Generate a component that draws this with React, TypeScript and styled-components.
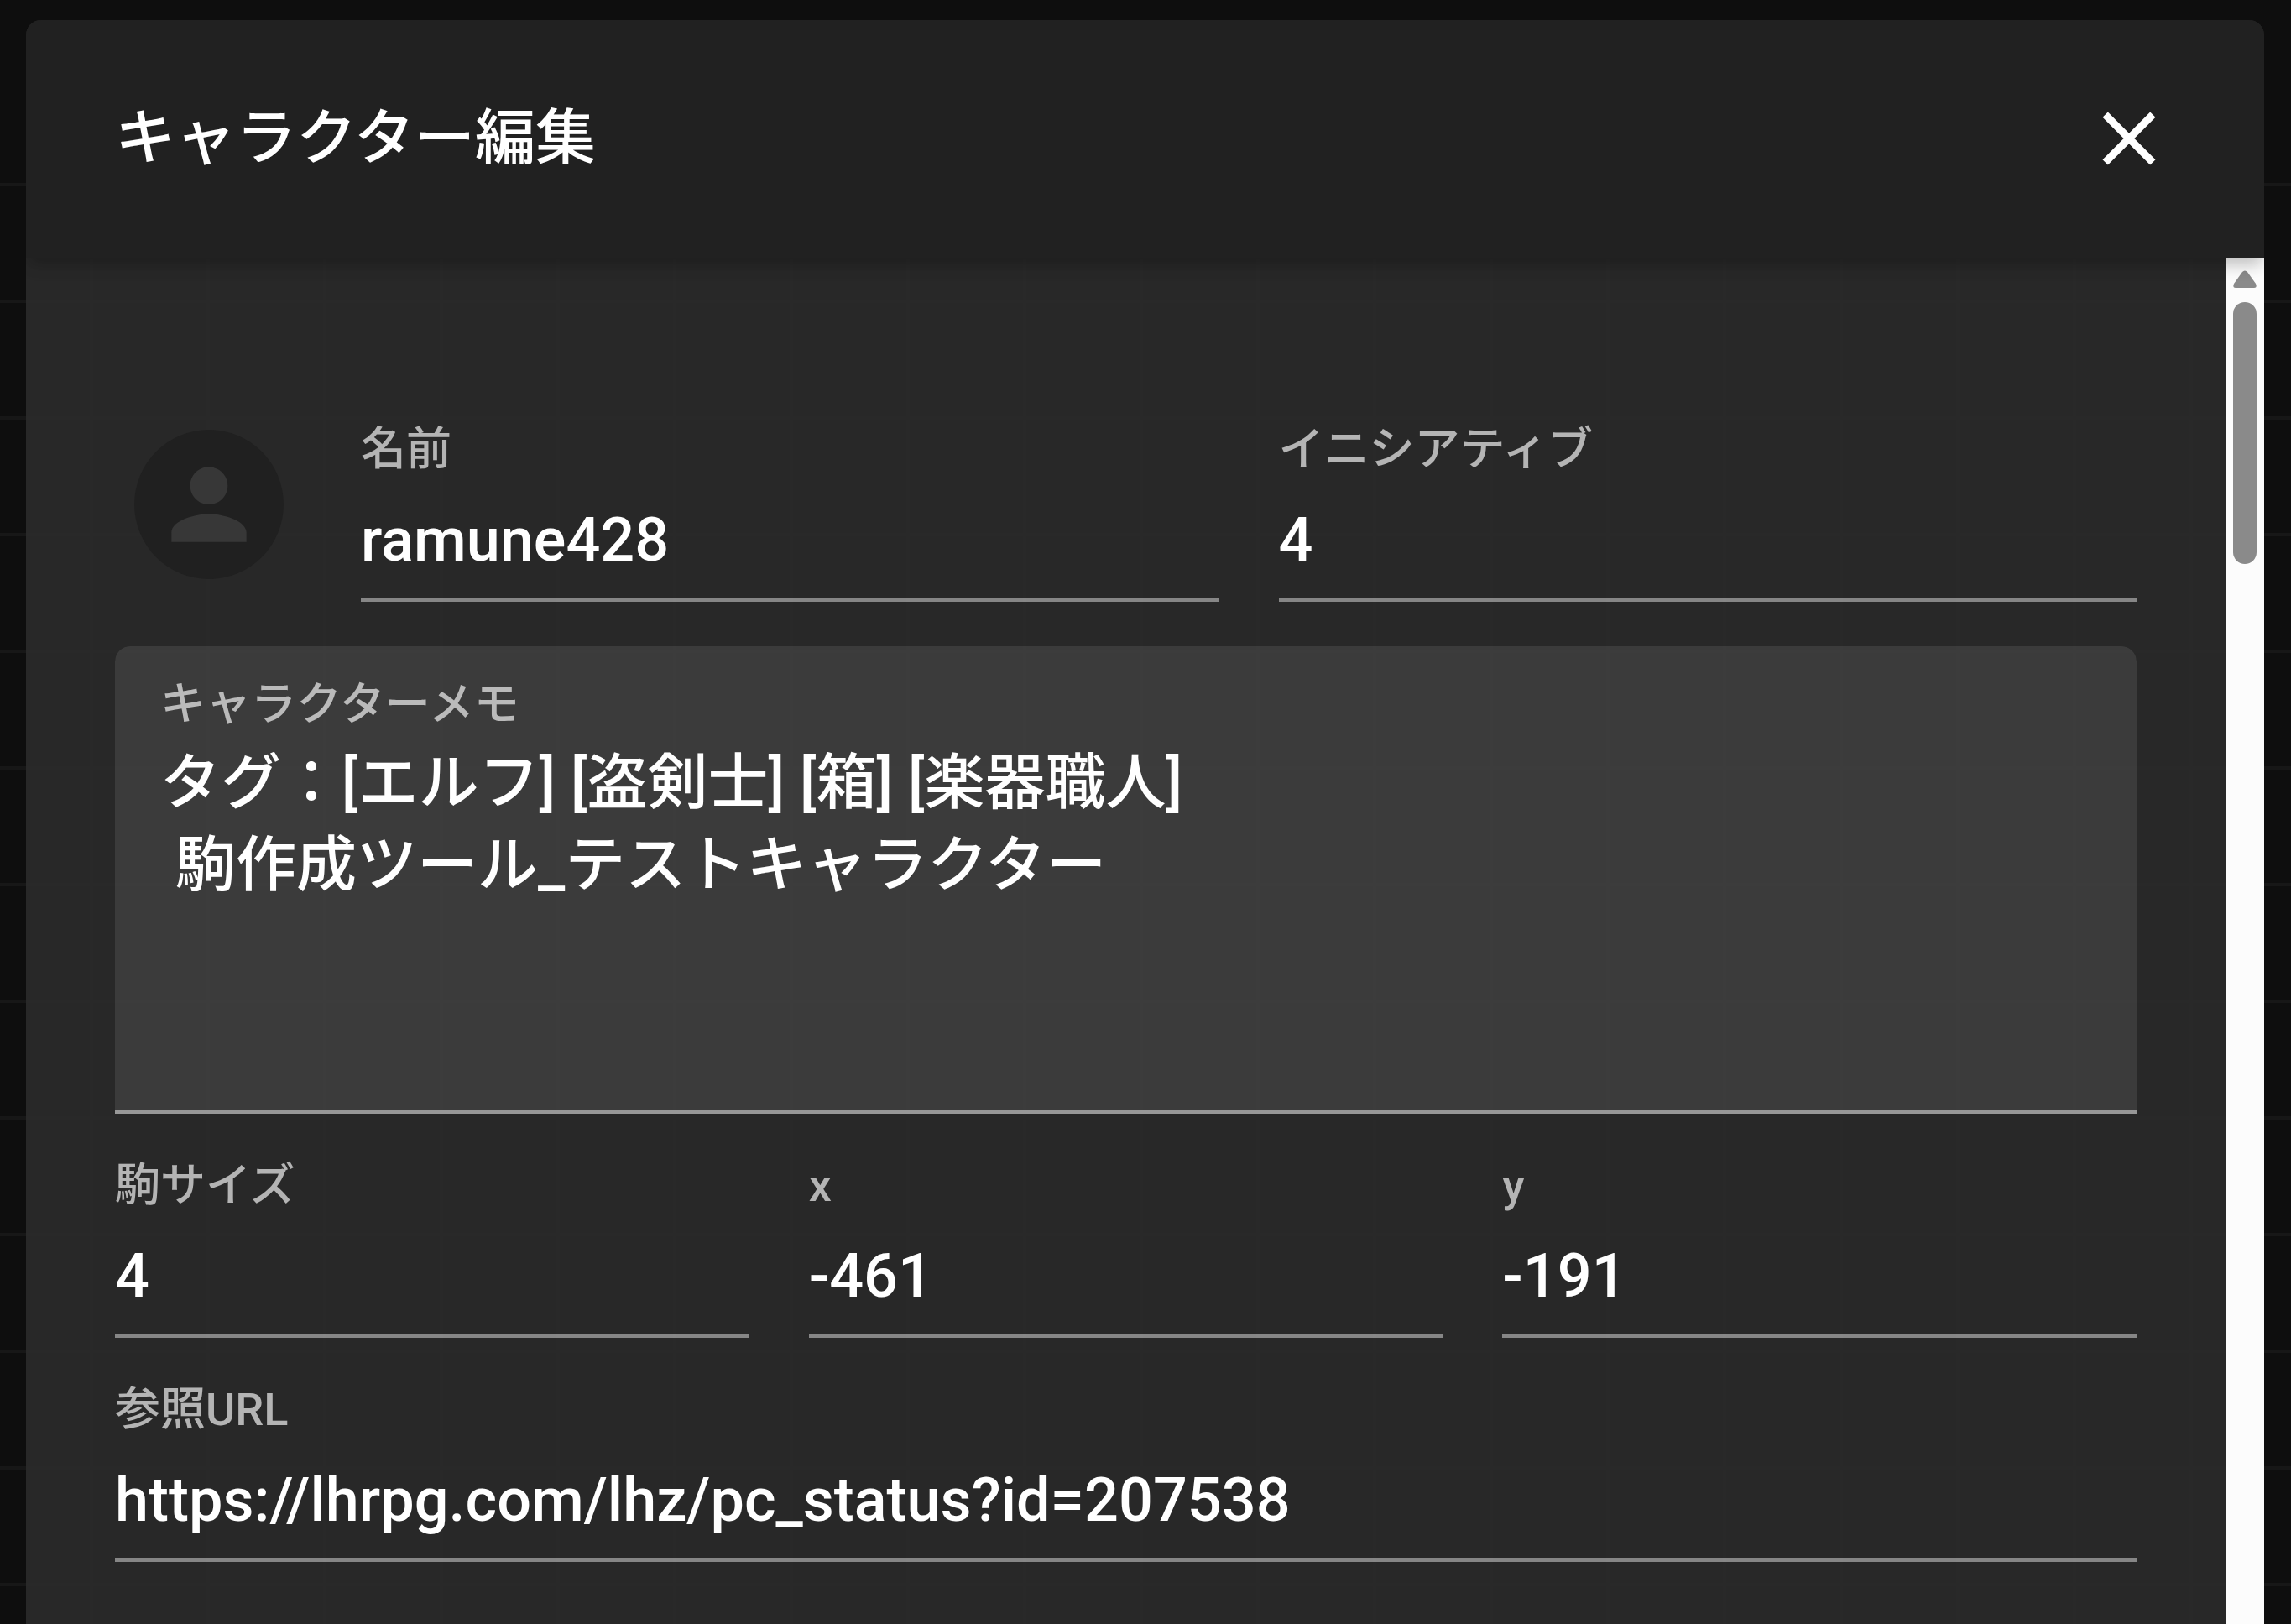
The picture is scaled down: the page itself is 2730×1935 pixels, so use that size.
import React, { useId } from "react";
import styled, { createGlobalStyle } from "styled-components";
import { MdClose, MdPerson } from "react-icons/md";

const GlobalStyle = createGlobalStyle`
  *, *::before, *::after { box-sizing: border-box; }
  body {
    margin: 0;
    background: #0e0e0e;
    color: #fff;
    font-family: Roboto, "Noto Sans CJK JP", sans-serif;
    font-size: 72px;
    font-weight: 500;
  }
`;

/* Board grid behind the dialog; it starts below the board's own bar. */
const Board = styled.div`
  display: flex;
  flex-direction: column;
  height: 100vh;
  padding: 24px 32px 0 31px;
  overflow: hidden;
  background-image: linear-gradient(#0e0e0e 200px, transparent 200px),
    linear-gradient(#171717 4px, transparent 4px),
    linear-gradient(90deg, #171717 4px, transparent 4px);
  background-size: 100% 100%, 139px 139px, 139px 139px;
  background-position: 0 0, 0 79px, 107px 0;
  background-repeat: no-repeat, repeat, repeat;
`;

const Dialog = styled.form`
  flex: 1;
  min-height: 0;
  display: flex;
  flex-direction: column;
  overflow: hidden;
  border-radius: 18px 18px 0 0;
  background: rgba(44, 44, 44, 0.88);
`;

const Header = styled.header`
  position: relative;
  z-index: 1;
  flex: none;
  display: flex;
  align-items: center;
  justify-content: space-between;
  height: 284px;
  padding: 0 107px 2px 106px;
  background: #212121;
  box-shadow: 0 9px 18px -4px rgba(0, 0, 0, 0.2),
    0 10px 20px 0 rgba(0, 0, 0, 0.08);
`;

const Title = styled.h1`
  margin: 0;
  font-size: 72px;
  font-weight: 500;
  line-height: 98px;
`;

const CloseButton = styled.button`
  display: flex;
  padding: 0;
  border: 0;
  background: none;
  color: #fff;
  font-size: 108px;
  cursor: pointer;
`;

const ScrollArea = styled.div`
  flex: 1;
  min-height: 0;
  display: flex;
`;

const Content = styled.div`
  flex: 1;
  min-width: 0;
  display: flex;
  flex-direction: column;
  gap: 53px;
  padding: 195px 106px 0;
`;

const Row = styled.div<{ $columns: string }>`
  display: grid;
  grid-template-columns: ${(p) => p.$columns};
  column-gap: 71px;
`;

const AvatarButton = styled.button`
  align-self: start;
  display: flex;
  align-items: center;
  justify-content: center;
  width: 178px;
  height: 178px;
  margin: 9px 21px 0 23px;
  padding: 0;
  border: 0;
  border-radius: 50%;
  background: #202020;
  color: #373737;
  font-size: 134px;
  cursor: pointer;
`;

const FieldBox = styled.div`
  display: flex;
  flex-direction: column;
  min-width: 0;
  border-bottom: 5px solid rgba(255, 255, 255, 0.44);
`;

const Label = styled.label`
  font-size: 54px;
  line-height: 66px;
  color: rgba(255, 255, 255, 0.65);
`;

const Input = styled.input`
  width: 100%;
  height: 143px;
  padding: 6px 0 0;
  border: 0;
  outline: 0;
  background: none;
  color: inherit;
  font: inherit;
`;

const MemoBox = styled(FieldBox)`
  gap: 11px;
  padding: 37px 54px 0;
  border-radius: 18px 18px 0 0;
  border-bottom-color: rgba(255, 255, 255, 0.52);
  background: rgba(255, 255, 255, 0.09);
  background-clip: padding-box;
`;

const MemoText = styled.textarea`
  display: block;
  width: 100%;
  height: 438px;
  padding: 0;
  border: 0;
  outline: 0;
  resize: none;
  overflow: hidden;
  background: none;
  color: inherit;
  font: inherit;
  line-height: 98px;
`;

const Track = styled.div`
  flex: none;
  display: flex;
  flex-direction: column;
  align-items: center;
  gap: 17px;
  width: 46px;
  padding-top: 14px;
  background: #fcfcfc;
`;

const Arrow = styled.svg`
  display: block;
  width: 28px;
  height: 21px;
  fill: #8a8a8a;
`;

const Thumb = styled.div`
  width: 28px;
  height: 312px;
  border-radius: 14px;
  background: #8a8a8a;
`;

type FieldProps = { label: string; value: string; type?: string };

function Field({ label, value, type = "text" }: FieldProps) {
  const id = useId();
  return (
    <FieldBox>
      <Label htmlFor={id}>{label}</Label>
      <Input id={id} type={type} defaultValue={value} />
    </FieldBox>
  );
}

export default function App() {
  return (
    <>
      <GlobalStyle />
      <Board>
        <Dialog role="dialog" aria-labelledby="dialog-title">
          <Header>
            <Title id="dialog-title">キャラクター編集</Title>
            <CloseButton type="button" aria-label="閉じる">
              <MdClose />
            </CloseButton>
          </Header>
          <ScrollArea>
            <Content>
              <Row $columns="auto 1fr 1fr">
                <AvatarButton type="button" aria-label="画像">
                  <MdPerson />
                </AvatarButton>
                <Field label="名前" value="ramune428" />
                <Field label="イニシアティブ" value="4" />
              </Row>
              <MemoBox>
                <Label htmlFor="memo">キャラクターメモ</Label>
                <MemoText
                  id="memo"
                  spellCheck={false}
                  defaultValue={
                    "タグ：[エルフ] [盗剣士] [箱] [楽器職人]\n 駒作成ツール_テストキャラクター"
                  }
                />
              </MemoBox>
              <Row $columns="repeat(3, 1fr)">
                <Field label="駒サイズ" value="4" />
                <Field label="x" value="-461" />
                <Field label="y" value="-191" />
              </Row>
              <Field
                label="参照URL"
                type="url"
                value="https://lhrpg.com/lhz/pc_status?id=207538"
              />
            </Content>
            <Track aria-hidden="true">
              <Arrow viewBox="0 0 28 21">
                <path d="M11 2Q14 -1 17 2L27 16Q29 21 25 21H3Q-1 21 1 16Z" />
              </Arrow>
              <Thumb />
            </Track>
          </ScrollArea>
        </Dialog>
      </Board>
    </>
  );
}
